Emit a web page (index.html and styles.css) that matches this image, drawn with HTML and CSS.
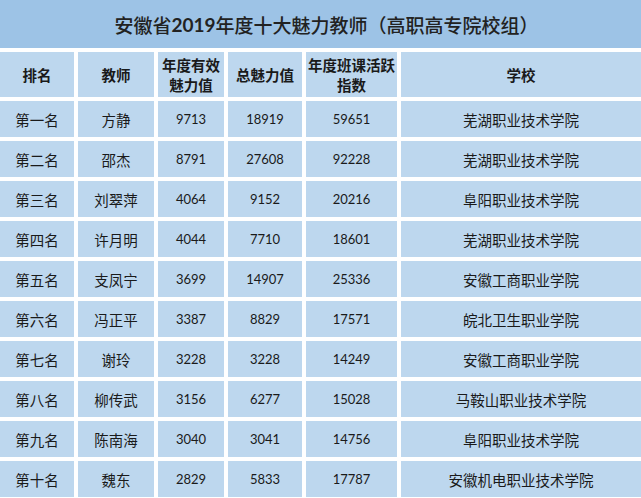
FILE: index.html
```html
<!DOCTYPE html>
<html lang="zh-CN">
<head>
<meta charset="utf-8">
<link rel="stylesheet" href="styles.css">
</head>
<body>
<div class="sheet">
  <div class="title">安徽省<span class="num-b">2019</span>年度十大魅力教师（高职高专院校组）</div>
  <div class="grid">
    <div class="th">排名</div>
    <div class="th">教师</div>
    <div class="th">年度有效<br>魅力值</div>
    <div class="th">总魅力值</div>
    <div class="th">年度班课活跃<br>指数</div>
    <div class="th">学校</div>

    <div class="td">第一名</div><div class="td">方静</div><div class="td num">9713</div><div class="td num">18919</div><div class="td num">59651</div><div class="td">芜湖职业技术学院</div>
    <div class="td">第二名</div><div class="td">邵杰</div><div class="td num">8791</div><div class="td num">27608</div><div class="td num">92228</div><div class="td">芜湖职业技术学院</div>
    <div class="td">第三名</div><div class="td">刘翠萍</div><div class="td num">4064</div><div class="td num">9152</div><div class="td num">20216</div><div class="td">阜阳职业技术学院</div>
    <div class="td">第四名</div><div class="td">许月明</div><div class="td num">4044</div><div class="td num">7710</div><div class="td num">18601</div><div class="td">芜湖职业技术学院</div>
    <div class="td">第五名</div><div class="td">支凤宁</div><div class="td num">3699</div><div class="td num">14907</div><div class="td num">25336</div><div class="td">安徽工商职业学院</div>
    <div class="td">第六名</div><div class="td">冯正平</div><div class="td num">3387</div><div class="td num">8829</div><div class="td num">17571</div><div class="td">皖北卫生职业学院</div>
    <div class="td">第七名</div><div class="td">谢玲</div><div class="td num">3228</div><div class="td num">3228</div><div class="td num">14249</div><div class="td">安徽工商职业学院</div>
    <div class="td">第八名</div><div class="td">柳传武</div><div class="td num">3156</div><div class="td num">6277</div><div class="td num">15028</div><div class="td">马鞍山职业技术学院</div>
    <div class="td">第九名</div><div class="td">陈南海</div><div class="td num">3040</div><div class="td num">3041</div><div class="td num">14756</div><div class="td">阜阳职业技术学院</div>
    <div class="td">第十名</div><div class="td">魏东</div><div class="td num">2829</div><div class="td num">5833</div><div class="td num">17787</div><div class="td">安徽机电职业技术学院</div>
  </div>
</div>
</body>
</html>
```
FILE: styles.css
```css
html, body {
  margin: 0;
  padding: 0;
  background: #ffffff;
}
.sheet {
  width: 641px;
  height: 498px;
  overflow: hidden;
  font-family: "Noto Sans CJK SC", "Noto Sans", sans-serif;
  color: #1a1a1a;
}
.title {
  height: 48px;
  background: #9dc3e6;
  display: flex;
  align-items: center;
  justify-content: center;
  font-size: 19px;
  font-weight: 500;
  color: #222;
  margin-bottom: 4px;
  padding-left: 12px;
}
.num-b {
  font-family: Lato, "Noto Sans", sans-serif;
  font-weight: 700;
  font-size: 19px;
}
.grid {
  display: grid;
  grid-template-columns: 74px 76px 66px 74px 91px 1fr;
  grid-template-rows: 45px repeat(10, 36px);
  gap: 4px;
}
.th, .td {
  background: #bdd7ee;
  display: flex;
  align-items: center;
  justify-content: center;
  text-align: center;
}
.th {
  font-weight: 700;
  font-size: 14.5px;
  line-height: 20px;
  color: #1a1a1a;
}
.td {
  font-size: 14.5px;
  color: #1a1a1a;
}
.td.num {
  font-family: Lato, "Noto Sans", sans-serif;
  font-size: 13px;
}
```
